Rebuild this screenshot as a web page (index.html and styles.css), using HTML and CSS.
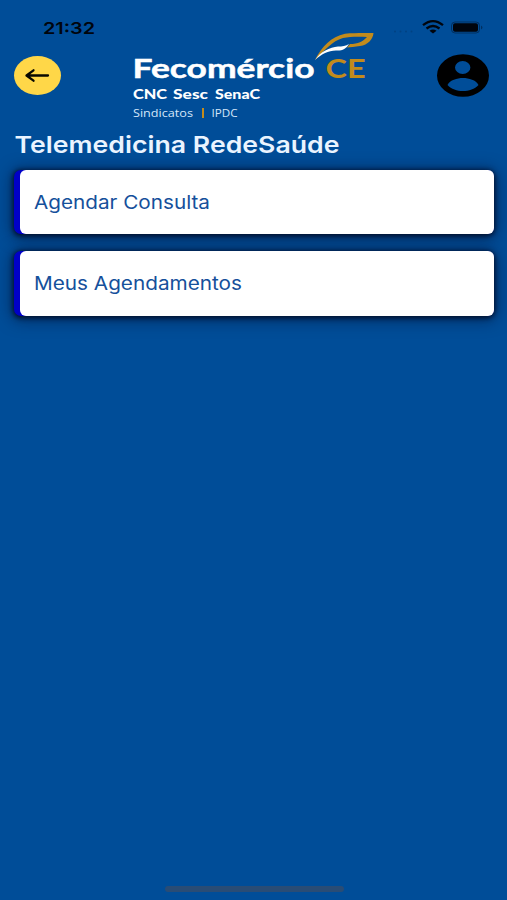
FILE: index.html
```html
<!DOCTYPE html>
<html lang="pt-BR">
<head>
<meta charset="utf-8">
<meta name="viewport" content="width=device-width, initial-scale=1">
<title>Telemedicina RedeSaúde</title>
<link rel="stylesheet" href="styles.css">
</head>
<body>
<div class="screen">
  <div class="status">
    <svg class="time" width="56" height="20"><text x="0" y="15.500" textLength="52" lengthAdjust="spacingAndGlyphs">21:32</text></svg>
    <svg class="signals" width="92" height="20" viewBox="0 0 92 20">
      <g class="dots"><circle cx="4" cy="13.500" r="1"/><circle cx="9.500" cy="13.500" r="1"/><circle cx="15" cy="13.500" r="1"/><circle cx="20.500" cy="13.500" r="1"/></g>
      <g fill="none" stroke="#00050d" stroke-width="2.300"><path d="M32 7.200Q42 -1 52 7.200"/><path d="M35.500 10.500Q42 5.500 48.500 10.500"/></g>
      <path d="M38.500 12.700Q42 10.200 45.500 12.700L42 15.500Z"/>
      <rect class="shell" x="60.500" y="4" width="28" height="11" rx="3.500"/>
      <rect x="62" y="5.200" width="25" height="8.600" rx="2"/>
      <path class="cap" d="M90 7.500Q93 9.500 90 11.500Z"/>
    </svg>
  </div>
  <header class="header">
    <button class="back" aria-label="Voltar">
      <svg width="26" height="16" viewBox="0 0 26 16"><path d="M23 7.500H2M8.500 2.300L1.500 7.500L8.500 12.700"/></svg>
    </button>
    <svg class="logo" width="245" height="90" viewBox="0 0 245 90">
      <text class="brand" x="0.500" y="47" textLength="182" lengthAdjust="spacingAndGlyphs">Fecomércio</text>
      <text class="state" x="193.500" y="47" textLength="40" lengthAdjust="spacingAndGlyphs">CE</text>
      <path class="gold" d="M183 29C190 15 199 6 213 2.700C223 1.700 233 2 241.500 2C241 8 236 14 228 15C223 16 218 16 215 16.500L218 13C226 13 231 10.500 235 6C227 5.500 218 5.500 211 7C200 10 193 19 183 29Z"/>
      <path class="wing" d="M183 29C188 21 198 16 206 15.500C210 15.500 214 15 217 13C214 18 210 20 204 19.500C196 19.500 190 23 183 29Z"/>
      <g class="members">
        <text x="1" y="67.500" textLength="34" lengthAdjust="spacingAndGlyphs">CNC</text>
        <text x="41" y="67.500" textLength="35" lengthAdjust="spacingAndGlyphs">Sesc</text>
        <text x="83" y="67.500" textLength="45" lengthAdjust="spacingAndGlyphs">SenaC</text>
      </g>
      <g class="units">
        <text x="1" y="86" textLength="60" lengthAdjust="spacingAndGlyphs">Sindicatos</text>
        <text x="79.500" y="86" textLength="26" lengthAdjust="spacingAndGlyphs">IPDC</text>
      </g>
      <rect class="gold" x="70" y="77" width="2" height="10"/>
    </svg>
    <button class="profile" aria-label="Perfil">
      <svg width="54" height="44" viewBox="0 0 54 44"><path fill-rule="evenodd" d="M1 21.500a26 21.300 0 1 0 52 0a26 21.300 0 1 0-52 0M19 13.500a7.700 6.500 0 1 1 15.400 0a7.700 6.500 0 1 1-15.400 0M11.500 31C14 26 21 24 27 24S40 26 42.500 31C35 39 19 39 11.500 31Z"/></svg>
    </button>
  </header>
  <main class="content">
    <h1><svg width="330" height="30"><text x="-0.500" y="22.500" textLength="325" lengthAdjust="spacingAndGlyphs">Telemedicina RedeSaúde</text></svg></h1>
    <div class="card"><div class="face"><svg width="220" height="28"><text x="0" y="20.500" textLength="176" lengthAdjust="spacingAndGlyphs">Agendar Consulta</text></svg></div></div>
    <div class="card"><div class="face"><svg width="220" height="28"><text x="0" y="20.500" textLength="208" lengthAdjust="spacingAndGlyphs">Meus Agendamentos</text></svg></div></div>
  </main>
  <div class="home"></div>
</div>
</body>
</html>
```
FILE: styles.css
```css
* { box-sizing: border-box; }
body { margin: 0; background: #004d98; font-family: Inter, "Liberation Sans", sans-serif; }
svg { display: block; overflow: visible; }
.screen { display: flex; flex-direction: column; height: 900px; overflow: hidden; }
.status { display: flex; justify-content: space-between; height: 32px; padding: 17.5px 24px 0 43px; margin-bottom: -1px; }
.status svg { fill: #00050d; }
.time { font-size: 16.5px; font-weight: 600; }
.dots { opacity: .15; }
.shell { fill: none; stroke: #00050d; opacity: .4; }
.cap { opacity: .4; }
.header { display: flex; align-items: flex-start; height: 99px; padding: 0 17px 0 14px; }
button { border: 0; padding: 0; background: none; }
.back { display: flex; align-items: center; justify-content: center; width: 47px; height: 39px; margin: 25px 71px 0 0; border-radius: 50%; background: #ffd748; }
.back path { fill: none; stroke: #080800; stroke-width: 2.3; stroke-linecap: round; stroke-linejoin: round; }
.logo { flex: none; }
.profile { margin: 23px 0 0 auto; }
.brand { font: 700 27.5px Lato, sans-serif; fill: #fff; stroke: #fff; stroke-width: .5px; }
.state { font: 700 27.5px Lato, sans-serif; fill: #c28b1c; }
.gold { fill: #c28b1c; }
.wing { fill: #fff; }
.members { font: 900 12.5px Lato, sans-serif; fill: #fff; }
.units { font: 400 11px "Open Sans", sans-serif; fill: #d5e7fa; }
.content { padding: 0 13px 0 14px; }
h1 { height: 39.5px; margin: 0 0 0 1px; font-size: 23.5px; font-weight: 600; fill: #eaf4ff; }
.card { height: 64.5px; margin-bottom: 17px; padding-left: 6px; border-radius: 7px; background: #0000c8; box-shadow: 0 1px 5px 1px rgba(0, 8, 30, .85), 0 2px 16px 2px rgba(0, 10, 40, .5); }
.face { display: flex; align-items: center; height: 100%; padding-left: 14px; border-radius: 6px; background: #fff; font-size: 18.5px; fill: #15509b; }
.home { width: 179px; height: 6px; margin: auto auto 8px 165px; border-radius: 3px; background: #294c75; }
```
